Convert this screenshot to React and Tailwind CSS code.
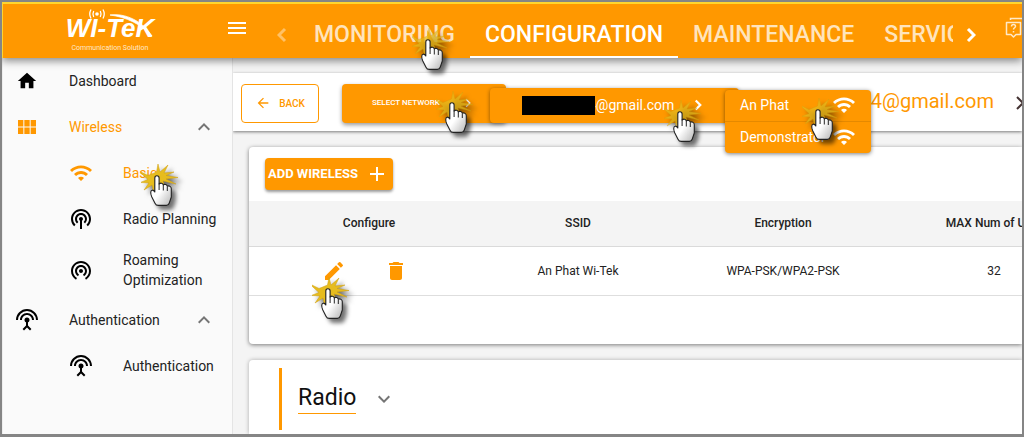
import React from "react";
import {
  MdAdd,
  MdArrowBack,
  MdDelete,
  MdEdit,
  MdExpandLess,
  MdExpandMore,
  MdHome,
  MdMenu,
  MdPodcasts,
  MdSettingsInputAntenna,
  MdViewModule,
  MdWifi,
  MdWifiTethering,
} from "react-icons/md";

const navItems = [
  { label: "Dashboard", icon: MdHome, iconClass: "size-[22px]" },
  { label: "Wireless", icon: MdViewModule, active: true, group: true },
  { label: "Basic", icon: MdWifi, active: true, sub: true },
  { label: "Radio Planning", icon: MdPodcasts, sub: true },
  { label: "Roaming Optimization", icon: MdWifiTethering, sub: true, tall: true },
  { label: "Authentication", icon: MdSettingsInputAntenna, group: true },
  { label: "Authentication", icon: MdSettingsInputAntenna, sub: true },
];

const tabs = ["MONITORING", "CONFIGURATION", "MAINTENANCE", "SERVICES"];

function Chevron({ className, flip = false, width = 3 }) {
  return (
    <svg viewBox="0 0 10 16" className={className} fill="none" stroke="currentColor" strokeWidth={width} aria-hidden="true">
      <path d={flip ? "M8 2 2 8l6 6" : "M2 2l6 6-6 6"} />
    </svg>
  );
}

function Pointer({ className, burst = "opacity-100" }) {
  return (
    <svg
      viewBox="0 0 48 56"
      className={`pointer-events-none absolute z-30 h-14 w-12 drop-shadow-[4px_4px_2px_rgba(0,0,0,0.55)] ${className}`}
      aria-hidden="true"
    >
      <path
        className={burst}
        fill="#e6bc1e"
        stroke="#cf9f10"
        strokeWidth=".5"
        d="M15.500 12 17 4l2 8 8-7-4 8 10-1-8 3.500 12 2-12 1.500 10 5-13-3 1 4-4-3-5 3-1 9-2-9-8 5 5-7-9-.5 8-3-10-9 10 5z"
      />
      <path
        fill="url(#hand)"
        stroke="#222"
        strokeWidth="1.100"
        strokeLinejoin="round"
        d="M13.800 32V18c0-1.400.8-2.200 2.100-2.200s2.200.8 2.200 2.200v6c1.500-1.300 3.700-.9 4.200.9 1.500-1 3.600-.3 4 1.300 2-.9 4 .4 4 2.600V37l-2 6c-.6 1.800-1.300 2.400-2.800 2.400h-8.200c-1.700 0-2.600-.6-3.300-2.200l-3.300-6.500c-1.400-3.200-1.300-6.200.4-6.500 1.200-.2 2.200.8 2.700 1.800z"
      />
      <path d="M18.100 23.500V30M22.300 25v5.500M26.300 26.500V31" stroke="#222" strokeWidth="1" fill="none" />
      <defs>
        <linearGradient id="hand" x1="0" y1="0" x2="1" y2="1">
          <stop offset=".5" stopColor="#fff" />
          <stop offset="1" stopColor="#b5b5b5" />
        </linearGradient>
      </defs>
    </svg>
  );
}

function Logo() {
  return (
    <a href="#" aria-label="Wi-Tek" className="relative flex flex-col items-center text-white">
      <span className="pt-1 font-['Liberation_Sans',sans-serif] text-[26px] leading-8 font-bold italic">WI-TeK</span>
      <span className="text-[7px] leading-[8px] text-[#ffe9cc]">Communication Solution</span>
      <svg viewBox="0 0 90 34" className="absolute top-0 left-0 h-[34px] w-[90px]" fill="none" aria-hidden="true">
        <circle cx="31" cy="6" r="1.800" fill="#fff" />
        <path
          d="M27.700 3q-1.500 3 0 6M25 1.500q-2.500 4.500 0 9M34.300 3q1.500 3 0 6M37 1.500q2.500 4.500 0 9"
          stroke="#fff"
          strokeWidth="1.300"
        />
        <path d="M44 7C60 5 76 13 86 28 75 16 60 9 44 7z" fill="#fff" stroke="#fff" strokeWidth=".8" />
      </svg>
    </a>
  );
}

function HelpIcon() {
  return (
    <svg viewBox="0 0 24 22" className="h-[22px] w-6 shrink-0" fill="none" stroke="#ffe9c8" strokeWidth="1.500" aria-hidden="true">
      <path d="M1.500 5.500h14v12h-4.500l-2.500 2.500-2.500-2.500H1.500z" strokeLinejoin="round" />
      <path d="M5.500 3V1.500H20v12h-1.500" />
      <path d="M6.500 9.500q0-2 2-2t2 1.800c0 1.500-2 1.500-2 3.200M8.500 14v1.500" />
    </svg>
  );
}

function Header() {
  return (
    <header className="relative z-10 flex h-14 shrink-0 border-t-2 border-l border-[#ffd52e] bg-[#ff9800] text-white shadow-[0_3px_8px_rgba(0,0,0,0.45)]">
      <div className="flex w-[214px] shrink-0 justify-center pt-1">
        <div>
          <Logo />
        </div>
      </div>
      <button aria-label="Toggle menu" className="flex w-10 shrink-0 items-center justify-center pb-1.5">
        <MdMenu className="size-6" />
      </button>
      <button aria-label="Previous tabs" className="flex w-[42px] shrink-0 items-center justify-center pt-2 pl-2 text-[#ffc166]">
        <Chevron flip className="h-4 w-[10px]" />
      </button>
      <nav className="flex min-w-0 flex-1 overflow-hidden text-[23px] font-medium">
        {tabs.map((tab) => (
          <a
            key={tab}
            href="#"
            className={
              tab === "CONFIGURATION"
                ? "flex items-center border-b-2 border-white px-[15px] pt-2.5"
                : "flex items-center border-b-2 border-transparent px-[15px] pt-2.5 text-[#ffe4bd]"
            }
          >
            {tab}
          </a>
        ))}
      </nav>
      <button aria-label="Next tabs" className="flex w-9 shrink-0 items-center justify-center pt-2">
        <Chevron className="h-4 w-[10px]" />
      </button>
      <button aria-label="Help" className="flex w-[33px] shrink-0 items-center overflow-hidden pb-1.5 pl-4">
        <HelpIcon />
      </button>
    </header>
  );
}

function Sidebar() {
  return (
    <aside className="w-[230px] shrink-0 border-r border-[#e4e4e4] bg-[#fafafa] text-[14px] leading-5 text-[#222]">
      <ul>
        {navItems.map(({ label, icon: Icon, iconClass = "size-6", active, group, sub, tall }, i) => (
          <li key={i}>
            <a
              href="#"
              className={`flex items-center gap-[30px] ${sub ? "pr-2 pl-[66px]" : "pr-4 pl-3"} ${tall ? "h-[55px]" : "h-[46px]"} ${active ? "text-[#ff9800]" : ""}`}
            >
              <span className={`flex w-6 shrink-0 justify-center ${active ? "" : "text-black"}`}>
                <Icon className={iconClass} />
              </span>
              <span className="flex-1">{label}</span>
              {group && <MdExpandLess className="size-6 text-[#757575]" />}
            </a>
          </li>
        ))}
      </ul>
    </aside>
  );
}

function NetworkPicker() {
  return (
    <div className="relative ml-[23px]">
      <button className="flex h-[39px] w-[164px] items-center gap-6 rounded bg-[#ff9800] pl-[30px] text-[8px] font-medium text-white shadow-[0_2px_4px_rgba(0,0,0,0.4)]">
        SELECT NETWORK
        <Chevron className="h-2.5 w-2" width={2} />
      </button>
      <button className="absolute top-1 left-[148px] flex h-[35px] w-[249px] items-center rounded bg-[#ff9800] pl-8 text-[14px] text-white shadow-[0_1px_4px_rgba(0,0,0,0.45)]">
        <span className="relative z-10 h-[19px] w-[73px] bg-black" />
        <span className="-ml-[7px]">4@gmail.com</span>
        <Chevron className="ml-5 h-3 w-2" />
      </button>
      <ul className="absolute top-[6px] left-[383px] z-10 w-[146px] divide-y divide-[#e58900] rounded bg-[#ff9800] text-[14px] text-white shadow-[0_1px_4px_rgba(0,0,0,0.5)]">
        {["An Phat", "Demonstrator"].map((name) => (
          <li key={name}>
            <button className="flex h-[31px] w-full items-center justify-between px-[15px]">
              {name}
              <MdWifi className="size-6 shrink-0" />
            </button>
          </li>
        ))}
      </ul>
    </div>
  );
}

function Toolbar() {
  return (
    <div className="flex h-[58px] items-center bg-white pt-0.5 pl-2 shadow-[0_1px_3px_rgba(0,0,0,0.5)]">
      <button className="flex h-[39px] w-[78px] shrink-0 items-center justify-center gap-2 rounded border border-[#ff9800] text-[10px] font-medium text-[#ff9800]">
        <MdArrowBack className="size-4" />
        BACK
      </button>
      <NetworkPicker />
      <span className="ml-auto pb-1 text-[20px] text-[#ff9800]">4@gmail.com</span>
      <Chevron className="-mr-1 ml-5 h-4 w-3 shrink-0 text-[#433]" width={2} />
    </div>
  );
}

function WirelessCard() {
  return (
    <section className="mt-4 ml-4 overflow-hidden rounded-l bg-white pt-[11px] pb-12 shadow-[0_1px_4px_rgba(0,0,0,0.5)]">
      <button className="ml-4 flex h-8 w-[128px] items-center justify-between rounded bg-[#ff9800] pr-1 pl-[3px] text-[13px] font-bold text-white shadow-[0_2px_3px_rgba(0,0,0,0.4)]">
        ADD WIRELESS
        <MdAdd className="size-6" />
      </button>
      <table className="mt-[11px] w-full min-w-[840px] table-fixed text-center text-[12px] text-[#222]">
        <colgroup>
          <col className="w-[240px]" />
          <col className="w-[178px]" />
          <col className="w-[232px]" />
          <col />
        </colgroup>
        <thead>
          <tr className="h-[45px] border-b border-[#dadada] bg-[#f4f4f4]">
            <th className="font-medium">Configure</th>
            <th className="font-medium">SSID</th>
            <th className="font-medium">Encryption</th>
            <th className="font-medium">MAX Num of User</th>
          </tr>
        </thead>
        <tbody>
          <tr className="h-[49px] border-b border-[#dedede]">
            <td>
              <div className="flex justify-center gap-[38px] pr-2 text-[#ff9800]">
                <button aria-label="Edit">
                  <MdEdit className="size-6" />
                </button>
                <button aria-label="Delete">
                  <MdDelete className="size-6" />
                </button>
              </div>
            </td>
            <td>An Phat Wi-Tek</td>
            <td>WPA-PSK/WPA2-PSK</td>
            <td>32</td>
          </tr>
        </tbody>
      </table>
    </section>
  );
}

function RadioCard() {
  return (
    <section className="mt-4 ml-4 flex-1 rounded-tl bg-white px-[30px] pt-2 shadow-[0_0_4px_rgba(0,0,0,0.3)]">
      <div className="flex h-[62px] items-center border-l-[3px] border-[#ff9800] pl-4">
        <h2 className="border-b border-[#ff9800] text-[23px] leading-[30px] text-[#111]">Radio</h2>
        <button aria-label="Expand radio settings" className="ml-4">
          <MdExpandMore className="size-6 text-[#757575]" />
        </button>
      </div>
    </section>
  );
}

export default function App() {
  return (
    <div className="relative flex min-h-screen flex-col overflow-hidden border-2 border-b-[3px] border-[#858585] bg-[#f4f4f4] font-[Roboto,sans-serif]">
      <Header />
      <div className="flex flex-1 border-l border-[#eeeeee]">
        <Sidebar />
        <main className="flex min-w-0 flex-1 flex-col overflow-hidden pt-[15px]">
          <Toolbar />
          <WirelessCard />
          <RadioCard />
        </main>
      </div>
      <Pointer className="top-[22px] left-[410px]" burst="opacity-70" />
      <Pointer className="top-[85px] left-[434px]" burst="opacity-70" />
      <Pointer className="top-[94px] left-[662px]" burst="opacity-70" />
      <Pointer className="top-[92px] left-[800px]" burst="opacity-70" />
      <Pointer className="top-[158px] left-[139px]" />
      <Pointer className="top-[271px] left-[310px]" />
    </div>
  );
}
